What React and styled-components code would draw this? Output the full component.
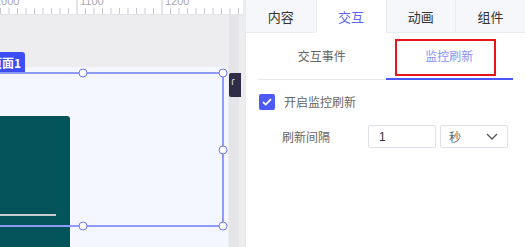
import React, { useState } from "react";
import styled, { createGlobalStyle } from "styled-components";

const GlobalStyle = createGlobalStyle`
  html, body { margin: 0; padding: 0; }
  body {
    font-family: "Noto Sans CJK SC", "Noto Sans", sans-serif;
    background: #ffffff;
  }
`;

const Layout = styled.div`
  display: grid;
  grid-template-columns: 245px 280px;
  width: 525px;
  height: 247px;
  overflow: hidden;
`;

const Editor = styled.div`
  display: flex;
  flex-direction: column;
  background: #ededf0;
  overflow: hidden;
`;

const Ruler = styled.div`
  position: relative;
  height: 14px;
  flex: none;
  background: #ffffff;
  border-bottom: 1px solid #e3e3e8;
  margin-right: 2px;
  overflow: hidden;
`;

const RulerLabel = styled.span`
  position: absolute;
  top: -5px;
  font-family: "Liberation Sans", Arial, sans-serif;
  font-size: 11px;
  color: #a8a8b0;
  line-height: 12px;
`;

const Canvas = styled.div`
  position: relative;
  flex: 1;
  display: flex;
  justify-content: flex-end;
  overflow: hidden;
`;

const ScrollTrack = styled.div`
  width: 10px;
  margin-right: 6px;
  background: #e5e5e9;
`;

const Page = styled.div`
  position: absolute;
  left: 0;
  top: 52px;
  width: 228px;
  height: 200px;
  background: #f4f7ff;
`;

const Card = styled.div`
  position: absolute;
  left: 0;
  top: 101px;
  width: 70px;
  height: 160px;
  background: #03545a;
  border-top-right-radius: 3px;
`;

const CardLine = styled.div`
  position: absolute;
  left: 0;
  top: 98px;
  width: 56px;
  height: 2px;
  background: #c9cdd0;
`;

const Badge = styled.div`
  position: absolute;
  left: -14px;
  top: 37px;
  height: 20px;
  padding: 0 4px;
  display: flex;
  align-items: center;
  background: #3d4df5;
  color: #ffffff;
  font-size: 12px;
  font-weight: 700;
  border-radius: 3px 3px 0 0;
`;

const Selection = styled.div`
  position: absolute;
  left: -10px;
  top: 57px;
  width: 234px;
  height: 155px;
  border: 2px solid #8f9afa;
  box-sizing: border-box;
`;

const Handle = styled.span`
  position: absolute;
  width: 7px;
  height: 7px;
  border-radius: 50%;
  background: #ffffff;
  border: 1.5px solid #6c78f7;
  transform: translate(-50%, -50%);
`;

const DarkLine = styled.div`
  position: absolute;
  left: 0;
  top: 210px;
  width: 80px;
  height: 2px;
  background: #2b56c6;
`;

const FloatTool = styled.div`
  position: absolute;
  left: 229px;
  top: 58px;
  width: 12px;
  height: 24px;
  background: #2e2c47;
  border-radius: 2px 0 0 2px;
  color: #d8d8e0;
  font-size: 11px;
  line-height: 14px;
  padding-left: 2px;
  box-sizing: border-box;
`;

const Panel = styled.div`
  display: flex;
  flex-direction: column;
  border-left: 1px solid #e6e9ef;
  background: #ffffff;
  overflow: hidden;
`;

const Tabs = styled.div`
  display: grid;
  grid-template-columns: repeat(4, 1fr);
  height: 33px;
  flex: none;
`;

const Tab = styled.div`
  display: flex;
  align-items: center;
  justify-content: center;
  font-size: 13px;
  color: ${(p) => (p.$active ? "#5b62f4" : "#333333")};
  background: ${(p) => (p.$active ? "#ffffff" : "#f5f7fa")};
  border-bottom: 1px solid ${(p) => (p.$active ? "transparent" : "#e8ebf0")};
  border-left: 1px solid #e8ebf0;
  box-sizing: border-box;
  &:first-child { border-left: none; }
`;

const SubTabs = styled.div`
  display: grid;
  grid-template-columns: 1fr 1fr;
  margin: 0 12px 0 12px;
  height: 46px;
  border-bottom: 1px solid #e6e8ec;
`;

const SubTab = styled.div`
  position: relative;
  display: flex;
  align-items: center;
  justify-content: center;
  font-size: 12px;
  color: ${(p) => (p.$active ? "#8b92f6" : "#666666")};
  border-bottom: 2px solid ${(p) => (p.$active ? "#4c55f5" : "transparent")};
  margin-bottom: -1px;
`;

const Annotation = styled.div`
  position: absolute;
  left: 9px;
  top: 6px;
  width: 101px;
  height: 37px;
  border: 2px solid #e8141c;
  box-sizing: border-box;
`;

const Form = styled.div`
  display: flex;
  flex-direction: column;
  padding: 13px 12px 0 13px;
  gap: 15px;
`;

const Row = styled.div`
  display: flex;
  align-items: center;
  padding-left: ${(p) => p.$indent || 0}px;
`;

const Check = styled.span`
  width: 16px;
  height: 16px;
  border-radius: 2px;
  background: #4d5af5;
  display: flex;
  align-items: center;
  justify-content: center;
  margin-right: 9px;
`;

const Label = styled.span`
  font-size: 12px;
  color: #666666;
  width: ${(p) => (p.$w ? `${p.$w}px` : "auto")};
`;

const Input = styled.div`
  width: 68px;
  height: 23px;
  border: 1px solid #dcdfe6;
  box-sizing: border-box;
  border-radius: 2px;
  display: flex;
  align-items: center;
  padding-left: 10px;
  font-family: "Liberation Sans", Arial, sans-serif;
  font-size: 12px;
  color: #333333;
  margin-right: 4px;
`;

const Select = styled(Input)`
  justify-content: space-between;
  padding: 0 9px 0 8px;
  font-family: "Noto Sans CJK SC", sans-serif;
  color: #666666;
  margin-right: 0;
`;

const majorTicks = [
  { x: -8, label: "1000" },
  { x: 77, label: "1100" },
  { x: 162, label: "1200" },
];

function RulerBar() {
  const ticks = [];
  for (let i = -1; i < 30; i++) {
    const x = -8 + i * 8.5;
    if (i % 10 === 0) continue;
    ticks.push(<line key={i} x1={x} x2={x} y1={8} y2={14} stroke="#c8c8ce" strokeWidth="1" />);
  }
  return (
    <Ruler>
      <svg width="245" height="14" style={{ position: "absolute", left: 0, top: 0 }}>
        {ticks}
        {majorTicks.map((t) => (
          <line key={t.label} x1={t.x} x2={t.x} y1={0} y2={14} stroke="#c8c8ce" strokeWidth="1" />
        ))}
      </svg>
      {majorTicks.map((t) => (
        <RulerLabel key={t.label} style={{ left: t.x + 3 }}>
          {t.label}
        </RulerLabel>
      ))}
    </Ruler>
  );
}

export default function App() {
  const [tab] = useState("交互");
  const handles = [
    [91, -1], [231, -1], [231, 75.5], [231, 152], [91, 152],
  ];
  return (
    <>
      <GlobalStyle />
      <Layout>
        <Editor>
          <RulerBar />
          <Canvas>
            <Page />
            <Card>
              <CardLine />
            </Card>
            <Badge>页面1</Badge>
            <DarkLine />
            <Selection>
              {handles.map(([x, y], i) => (
                <Handle key={i} style={{ left: x, top: y }} />
              ))}
            </Selection>
            <FloatTool>ɾ</FloatTool>
            <ScrollTrack />
          </Canvas>
        </Editor>
        <Panel>
          <Tabs>
            {["内容", "交互", "动画", "组件"].map((t) => (
              <Tab key={t} $active={t === tab}>{t}</Tab>
            ))}
          </Tabs>
          <SubTabs>
            <SubTab>交互事件</SubTab>
            <SubTab $active>
              监控刷新
              <Annotation />
            </SubTab>
          </SubTabs>
          <Form>
            <Row>
              <Check>
                <svg width="10" height="8" viewBox="0 0 10 8">
                  <path d="M1 4 L3.8 6.6 L9 1.2" fill="none" stroke="#fff" strokeWidth="1.8" />
                </svg>
              </Check>
              <Label>开启监控刷新</Label>
            </Row>
            <Row $indent={23}>
              <Label $w={86}>刷新间隔</Label>
              <Input>1</Input>
              <Select>
                秒
                <svg width="12" height="7" viewBox="0 0 12 7">
                  <path d="M1 1 L6 6 L11 1" fill="none" stroke="#555" strokeWidth="1.3" />
                </svg>
              </Select>
            </Row>
          </Form>
        </Panel>
      </Layout>
    </>
  );
}
